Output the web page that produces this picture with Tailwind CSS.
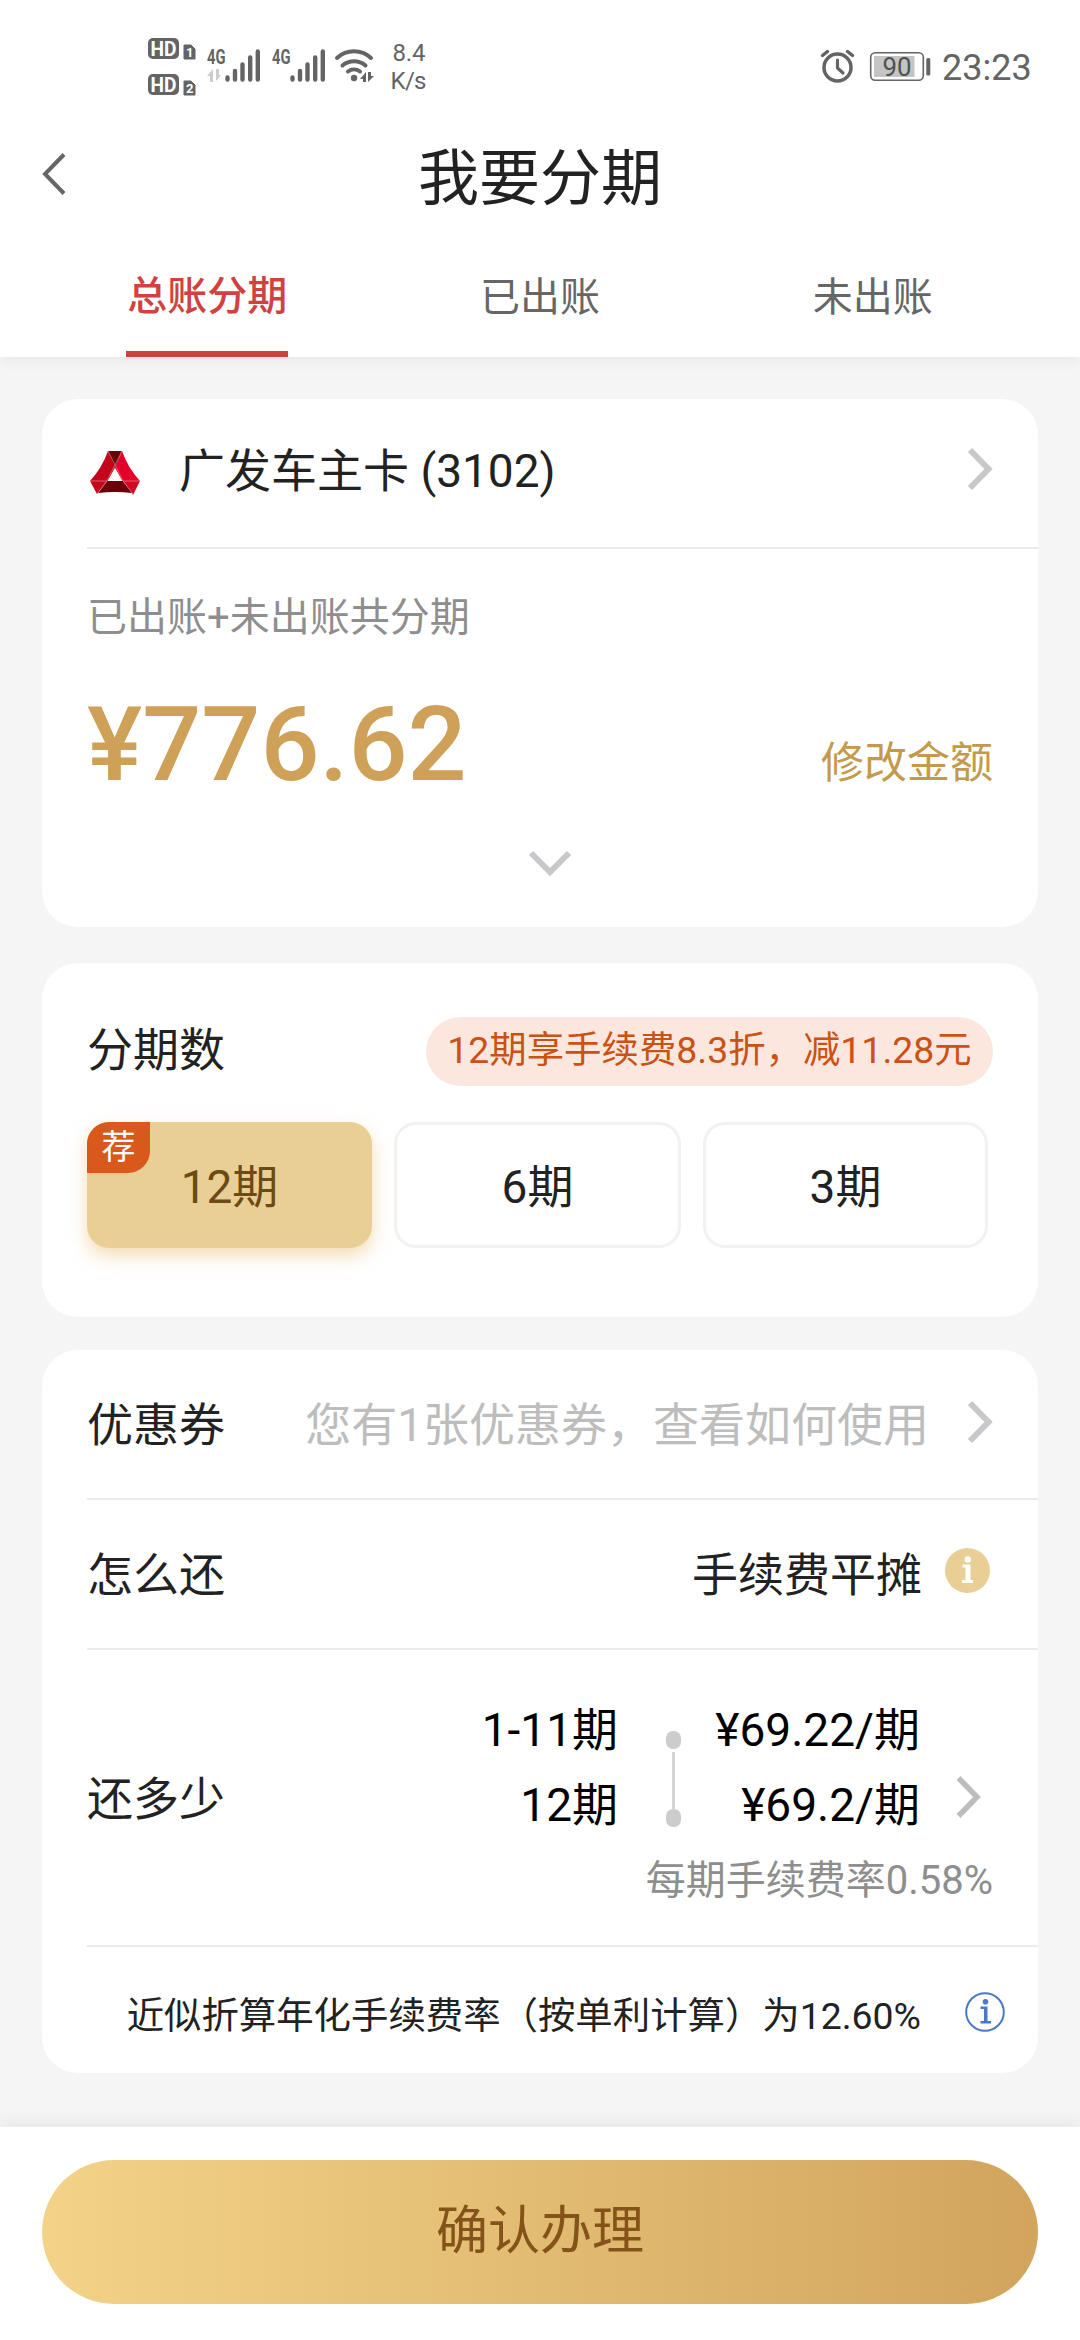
<!DOCTYPE html>
<html lang="zh-CN">
<head>
<meta charset="utf-8">
<title>我要分期</title>
<script src="https://cdn.jsdelivr.net/npm/@tailwindcss/browser@4"></script>
</head>
<body class="flex h-[2340px] w-[1080px] flex-col overflow-hidden bg-[#f5f5f5] font-['Roboto','Noto_Sans_CJK_SC',sans-serif] text-[46px] leading-none text-[#222]">

<header class="relative z-10 h-[357px] shrink-0 bg-white shadow-[0_2px_14px_rgba(0,0,0,0.07)]">
  <!-- status bar -->
  <div class="flex h-[120px] items-start justify-between pl-[148px] pr-[50px] text-[#646464]">
    <svg class="mt-[34px] h-[66px] w-[284px]" viewBox="148 34 284 66" fill="#646464">
      <rect x="148" y="38" width="31" height="21" rx="5"/>
      <rect x="148" y="74" width="31" height="21" rx="5"/>
      <g fill="#fff" font-family="Roboto" font-weight="700" font-size="20.5">
        <text x="150.5" y="56" textLength="26" lengthAdjust="spacingAndGlyphs">HD</text>
        <text x="150.5" y="92" textLength="26" lengthAdjust="spacingAndGlyphs">HD</text>
      </g>
      <path d="M184 45h7l4 4v10h-11zM184 81h7l4 4v10h-11z" stroke="#646464"/>
      <g fill="#fff" font-family="Roboto" font-weight="700" font-size="13">
        <text x="186" y="57">1</text><text x="186" y="93">2</text>
      </g>
      <g font-family="Roboto" font-weight="700" font-size="20.5">
        <text x="207" y="63.500" textLength="18.500" lengthAdjust="spacingAndGlyphs">4G</text>
        <text x="272" y="63.500" textLength="18.500" lengthAdjust="spacingAndGlyphs">4G</text>
      </g>
      <path fill="#ccc" d="M207 76l6-7v13h-3v-6zM221 75l-5 6v-12h3v6z"/>
      <g stroke="#646464" stroke-width="4.400" stroke-linecap="round">
        <path d="M227.500 77.500v2M235 71v8.500M242.500 64.500v15M250.200 57.500v22M257.800 51.500v28"/>
        <path d="M292.500 77.500v2M300 71v8.500M307.500 64.500v15M315.200 57.500v22M322.800 51.500v28"/>
      </g>
      <g fill="none" stroke="#646464" stroke-width="4" stroke-linecap="round">
        <path d="M337 58a25 25 0 0 1 34 0M342.500 65.500a18 18 0 0 1 23 0M348 71.500a10 10 0 0 1 12 0"/>
      </g>
      <circle cx="354" cy="78" r="3.200"/>
      <path d="M360 79l6-7v10h-3v-3zM374 76l-6 6v-10h3v4z"/>
      <g font-family="Roboto" font-size="24">
        <text x="392.500" y="61" textLength="33" lengthAdjust="spacing">8.4</text>
        <text x="390.500" y="89" textLength="36" lengthAdjust="spacing">K/s</text>
      </g>
    </svg>
    <div class="mt-[46px] flex h-[40px] items-center">
      <svg class="h-[40px] w-[112px]" viewBox="818 46 112 40" fill="none" stroke="#646464">
        <circle cx="836.500" cy="67.500" r="13.500" stroke-width="3.500"/>
        <path d="M836.500 60v8l5.500 5" stroke-width="3.200" stroke-linecap="round"/>
        <path d="M821.500 55.500l5-4M851.500 55.500l-5-4" stroke-width="3.500" stroke-linecap="round"/>
        <rect x="869.700" y="52.700" width="52.600" height="27.600" rx="4.500" stroke-width="1.600"/>
        <rect x="873" y="56" width="40.500" height="21" fill="#c4c4c4" stroke="none"/>
        <rect x="925.300" y="58" width="4" height="17.500" rx="1.500" fill="#646464" stroke="none"/>
        <text x="881.500" y="75.500" fill="#505050" stroke="none" font-family="Roboto" font-size="26" textLength="29" lengthAdjust="spacingAndGlyphs">90</text>
      </svg>
      <span class="ml-[11px] w-[88px] pt-[3px] text-[36px]">23:23</span>
    </div>
  </div>
  <!-- title -->
  <div class="grid h-[118px] grid-cols-[1fr_auto_1fr] items-center px-[42px]">
    <svg class="mb-[10px] h-[42px] w-[24px]" viewBox="0 0 24 42" fill="none" stroke="#666" stroke-width="4"><path d="M22 1.500 3 21 22 40.500"/></svg>
    <h1 class="text-[61px] text-[#222]">我要分期</h1>
  </div>
  <!-- tabs -->
  <nav class="grid h-[119px] grid-cols-3 px-[41px] text-[40px] text-[#666]">
    <div class="flex justify-center"><span class="flex w-[162px] items-center justify-center border-b-[6px] border-[#cf4240] pb-[1px] pt-[6px] font-medium text-[#cf4240]">总账分期</span></div>
    <div class="flex items-center justify-center">已出账</div>
    <div class="flex items-center justify-center">未出账</div>
  </nav>
</header>

<main class="flex flex-1 flex-col px-[42px] pt-[42px]">
  <!-- amount -->
  <section class="h-[528px] rounded-[36px] bg-white pl-[45px]">
    <div class="flex h-[150px] items-center border-b-[2px] border-[#ebebeb] pb-[6px] pr-[45px]">
      <svg class="ml-[3px] mt-[4px] h-[45px] w-[50px]" viewBox="0 0 50 45">
        <path fill="#c4061c" d="M18 1 32 26 25 18 17 32 0 31Q12 18 18 1z"/>
        <path fill="#e4002b" d="M32 1Q38 18 50 31L33 32 25 18z"/>
        <path fill="#6b0008" d="M18 1h14l-7 17z"/>
        <path fill="#c4061c" d="M0 31h17L7 44z"/>
        <path fill="#d20a24" d="M50 31H33l10 14z"/>
        <path fill="#6b0008" d="M17 31h16l9 12Q25 41 8 43z"/>
        <path fill="#fff" d="M25 18l6 12H19z"/>
        <path fill="none" stroke="#f29aa0" stroke-width=".6" d="M18 1 33 31h17M32 1 17 31H0M17 31 7 44M33 31l10 13"/>
      </svg>
      <span class="ml-[39px] mt-[2px] flex-1">广发车主卡 (3102)</span>
      <svg class="mb-[3px] h-[44px] w-[27px]" viewBox="0 0 27 44" fill="none" stroke="#c8c8cc" stroke-width="6"><path d="M4 3 22.500 22 4 41"/></svg>
    </div>
    <p class="mt-[49px] text-[40px] text-[#8e8e8e]">已出账+未出账共分期</p>
    <div class="mt-[55px] flex items-end justify-between pr-[45px]">
      <span class="text-[104px] font-medium text-[#cfa158]">¥776.62</span>
      <span class="mb-[12px] text-[43px] text-[#c39a4b]">修改金额</span>
    </div>
    <svg class="ml-[441px] mt-[53px] h-[28px] w-[44px]" viewBox="0 0 44 28" fill="none" stroke="#c8c8cc" stroke-width="6"><path d="M3 3 22 22 41 3"/></svg>
  </section>

  <!-- periods -->
  <section class="mt-[36px] h-[354px] rounded-[36px] bg-white px-[45px] pt-[54px]">
    <div class="flex h-[69px] items-center justify-between">
      <span class="pb-[3px]">分期数</span>
      <span class="flex h-[69px] w-[567px] items-center justify-center rounded-full bg-[#fce7de] pb-[1px] text-[37.4px] text-[#c95214]">12期享手续费8.3折，减11.28元</span>
    </div>
    <div class="mt-[36px] flex h-[126px] gap-[22px]">
      <div class="relative flex w-[285px] items-center justify-center rounded-[22px] bg-[#e9cf95] pt-[3px] text-[#6b4a14] shadow-[0_8px_18px_rgba(233,190,110,0.5)]">
        <span class="absolute left-0 top-0 flex h-[51px] w-[63px] items-center justify-center rounded-br-[22px] rounded-tl-[22px] bg-[#d9591c] pb-[2px] text-[34px] text-white">荐</span>
        12期
      </div>
      <div class="flex w-[287px] items-center justify-center rounded-[22px] border-[3px] border-[#f2f2f2] pt-[3px]">6期</div>
      <div class="flex w-[285px] items-center justify-center rounded-[22px] border-[3px] border-[#f2f2f2] pt-[3px]">3期</div>
    </div>
  </section>

  <!-- repayment details -->
  <section class="mt-[33px] h-[723px] rounded-[36px] bg-white pl-[45px]">
    <div class="flex h-[150px] items-center border-b-[2px] border-[#ebebeb] pr-[45px]">
      <span class="pt-[2px]">优惠券</span>
      <span class="ml-auto mr-[37px] pt-[2px] text-[#bdbdbd]">您有1张优惠券，查看如何使用</span>
      <svg class="mb-[4px] h-[44px] w-[27px]" viewBox="0 0 27 44" fill="none" stroke="#c8c8cc" stroke-width="6"><path d="M4 3 22.500 22 4 41"/></svg>
    </div>
    <div class="flex h-[150px] items-center border-b-[2px] border-[#ebebeb] pr-[48px]">
      <span class="pt-[2px]">怎么还</span>
      <span class="ml-auto mr-[23px] pt-[2px]">手续费平摊</span>
      <svg class="mb-[7px] h-[45px] w-[45px]" viewBox="0 0 45 45"><circle cx="22.500" cy="22.500" r="22.500" fill="#e9cf95"/><path fill="#fff" d="M17.500 16.500h8V32H28v3H17v-3h3.500V19.500h-3z"/><circle cx="22.800" cy="11.500" r="3.200" fill="#fff"/></svg>
    </div>
    <div class="flex h-[297px] items-center border-b-[2px] border-[#ebebeb] pr-[45px]">
      <span class="pt-[3px]">还多少</span>
      <div class="ml-auto pt-[16px] text-black">
        <div class="flex justify-end">
          <div class="w-[160px] text-right leading-[75px]">1-11期<br>12期</div>
          <div class="ml-[48px] mt-[38px] flex w-[15px] flex-col items-center">
            <i class="h-[18px] w-[15px] rounded-[7px] bg-[#ccc]"></i>
            <i class="mt-[3px] h-[57px] w-[3px] bg-[#d4d4d4]"></i>
            <i class="h-[18px] w-[15px] rounded-[7px] bg-[#ccc]"></i>
          </div>
          <div class="w-[239px] text-right leading-[75px]">¥69.22/期<br>¥69.2/期</div>
          <svg class="ml-[35px] mr-[11px] mt-[82px] h-[44px] w-[27px]" viewBox="0 0 27 44" fill="none" stroke="#bdbdbd" stroke-width="5.500"><path d="M3.500 3 22 22 3.500 41"/></svg>
        </div>
        <p class="text-right text-[40px] leading-[75px] text-[#8e8e8e]">每期手续费率0.58%</p>
      </div>
    </div>
    <div class="flex h-[126px] items-center justify-end pr-[33px] text-[37.4px]">
      <span class="mt-[13px]">近似折算年化手续费率（按单利计算）为12.60%</span>
      <svg class="ml-[44px] mt-[3px] h-[40px] w-[40px]" viewBox="0 0 40 40"><circle cx="20" cy="20" r="18.800" fill="none" stroke="#4a78c8" stroke-width="2"/><path fill="#4a78c8" d="M15.500 14.500h7V29h3.500v2.500H15.500V29H19V17h-3.500z"/><circle cx="20.500" cy="9.800" r="2.800" fill="#4a78c8"/></svg>
    </div>
  </section>
</main>

<footer class="relative h-[213px] shrink-0 bg-white px-[42px] pt-[33px] shadow-[0_-4px_16px_rgba(0,0,0,0.07)]">
  <div class="flex h-[144px] items-center justify-center rounded-full bg-linear-to-r from-[#f2d388] to-[#d2a45e] text-[52px] text-[#84531a]">确认办理</div>
</footer>
</body>
</html>
